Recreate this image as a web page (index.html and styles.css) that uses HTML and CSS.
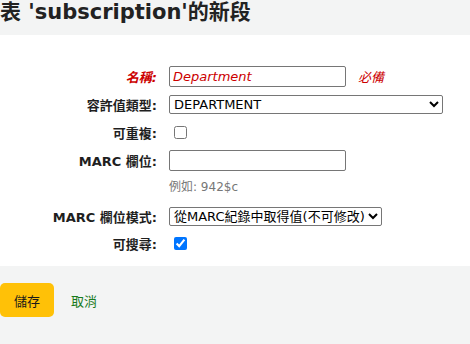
FILE: index.html
```html
<!DOCTYPE html>
<html lang="zh-Hant">
<head>
<meta charset="utf-8">
<title>表 'subscription'的新段</title>
<link rel="stylesheet" href="styles.css">
</head>
<body>
<h1 class="page-title">表 'subscription'的新段</h1>
<form class="form">
  <fieldset class="rows">
    <div class="row">
      <label class="label required" for="name">名稱:</label>
      <div class="field">
        <input class="text required-input" type="text" id="name" value="Department">
        <span class="required-note">必備</span>
      </div>
    </div>
    <div class="row">
      <label class="label" for="av">容許值類型:</label>
      <div class="field">
        <select class="select wide" id="av"><option>DEPARTMENT</option></select>
      </div>
    </div>
    <div class="row">
      <label class="label" for="rep">可重複:</label>
      <div class="field"><input class="check" type="checkbox" id="rep"></div>
    </div>
    <div class="row">
      <label class="label" for="marc">MARC 欄位:</label>
      <div class="field"><input class="text" type="text" id="marc"></div>
    </div>
    <div class="hint-row">
      <div class="spacer"></div>
      <div class="hint">例如: 942$c</div>
    </div>
    <div class="row row-gap">
      <label class="label" for="mode">MARC 欄位模式:</label>
      <div class="field">
        <select class="select" id="mode"><option>從MARC紀錄中取得值(不可修改)</option></select>
      </div>
    </div>
    <div class="row row-last">
      <label class="label" for="search">可搜尋:</label>
      <div class="field"><input class="check" type="checkbox" id="search" checked></div>
    </div>
  </fieldset>
  <fieldset class="action">
    <button class="btn-save" type="button">儲存</button>
    <a class="cancel" href="#">取消</a>
  </fieldset>
</form>
</body>
</html>
```
FILE: styles.css
```css
html, body {
  margin: 0;
  padding: 0;
  background: #ffffff;
}
body {
  font-family: "DejaVu Sans", "Noto Sans CJK TC", sans-serif;
  font-size: 13px;
  color: #1f1f1f;
}
.page-title {
  margin: 0;
  background: #f3f4f4;
  font-size: 21px;
  font-weight: bold;
  line-height: 25px;
  height: 25px;
  padding: 0 0 10px 0;
  color: #222;
  white-space: nowrap;
}
.form {
  margin: 0;
}
.rows {
  margin: 0;
  border: 0;
  padding: 27px 0 10px 0;
}
.row {
  display: flex;
  align-items: center;
  height: 28px;
}
.row-gap {
  margin-top: 6px;
}
.row-last {
  height: 26px;
}
.label {
  width: 157px;
  margin-right: 12px;
  text-align: right;
  font-weight: bold;
  font-size: 13px;
  flex: none;
}
.label.required {
  color: #cc0000;
  font-style: italic;
}
.field {
  display: flex;
  align-items: center;
}
.text {
  width: 177px;
  height: 21px;
  box-sizing: border-box;
  margin: 0;
  padding: 1px 3px;
  border: 1px solid #767676;
  border-radius: 2px;
  font-family: "DejaVu Sans", "Noto Sans CJK TC", sans-serif;
  font-size: 13px;
  color: #000;
}
.required-input {
  color: #cc0000;
  font-style: italic;
}
.required-note {
  margin-left: 12px;
  color: #cc0000;
  font-style: italic;
}
.select {
  margin: 0;
  height: 19px;
  font-family: "DejaVu Sans", "Noto Sans CJK TC", sans-serif;
  font-size: 13px;
  color: #000;
  border: 1px solid #767676;
  border-radius: 2px;
  background: #fff;
}
.select.wide {
  width: 274px;
}
.check {
  margin: 0 0 0 5px;
  width: 13px;
  height: 13px;
}
.hint-row {
  display: flex;
  height: 22px;
  align-items: center;
}
.spacer {
  width: 169px;
  flex: none;
}
.hint {
  font-size: 12px;
  color: #777;
}
.action {
  margin: 0;
  border: 0;
  background: #f3f4f4;
  padding: 17px 0 27px 0;
  display: flex;
  align-items: center;
}
.btn-save {
  height: 34px;
  width: 54px;
  padding: 0;
  border: 0;
  border-radius: 5px;
  background: #ffc107;
  font-family: "DejaVu Sans", "Noto Sans CJK TC", sans-serif;
  font-size: 13px;
  color: #1a1a1a;
}
.cancel {
  margin-left: 17px;
  color: #187a1c;
  text-decoration: none;
  font-size: 13px;
}
```
